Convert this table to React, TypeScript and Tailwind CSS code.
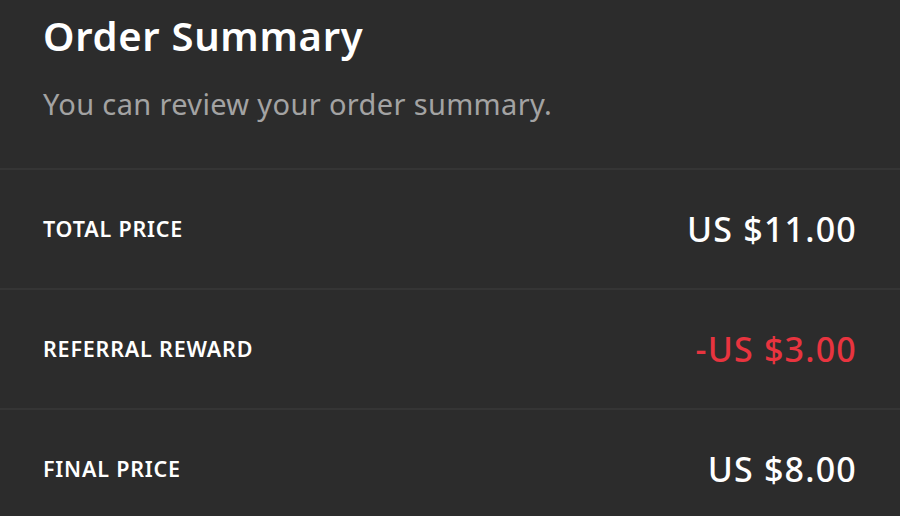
const ROWS = [
  { label: 'TOTAL PRICE', value: 'US $11.00', negative: false },
  { label: 'REFERRAL REWARD', value: '-US $3.00', negative: true },
  { label: 'FINAL PRICE', value: 'US $8.00', negative: false },
];

export default function App() {
  return (
    <div className="h-[516px] w-[900px] overflow-hidden bg-[#2c2c2c] font-['Noto_Sans',sans-serif]">
      <div className="px-[43px] pt-[10px] pb-[46px]">
        <h1 className="text-[40px] font-semibold leading-[52px] tracking-[0.7px] text-white">
          Order Summary
        </h1>
        <p className="mt-[24px] text-[29px] leading-[36px] tracking-[0.35px] text-[#a3a3a3]">
          You can review your order summary.
        </p>
      </div>
      {ROWS.map((row) => (
        <div
          key={row.label}
          className="flex h-[120px] items-center justify-between border-t-2 border-[#353535] px-[43px]"
        >
          <span className="text-[21.5px] font-semibold tracking-[0.8px] text-white">{row.label}</span>
          <span
            className={`text-[34px] font-medium tracking-[1.2px] ${
              row.negative ? 'text-[#e8343f]' : 'text-white'
            }`}
          >
            {row.value}
          </span>
        </div>
      ))}
    </div>
  );
}
